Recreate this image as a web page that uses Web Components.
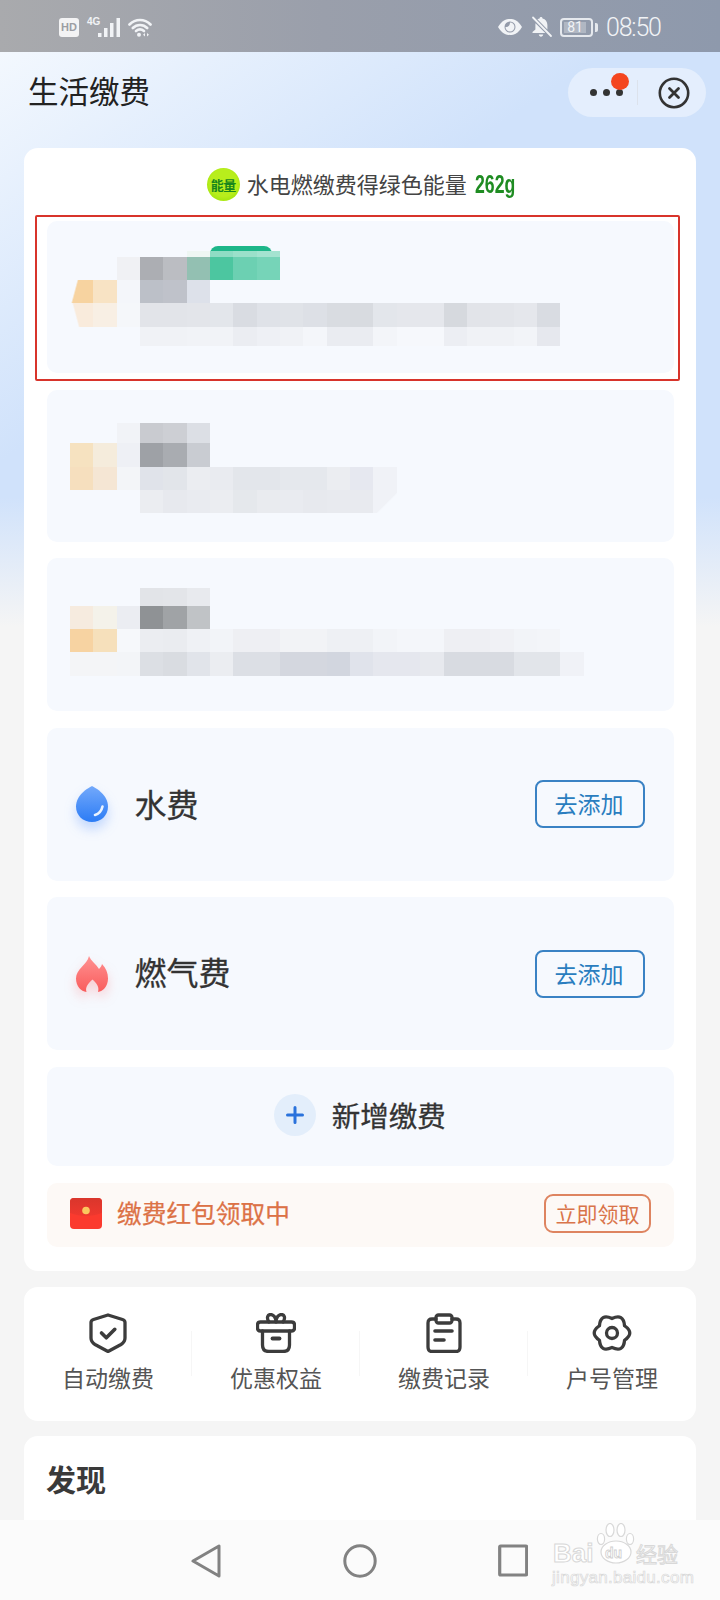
<!DOCTYPE html>
<html lang="zh">
<head>
<meta charset="utf-8">
<title>生活缴费</title>
<style>
  html, body { margin: 0; padding: 0; }
  body {
    width: 720px;
    height: 1600px;
    overflow: hidden;
    font-family: "Noto Sans CJK SC", "Noto Sans", sans-serif;
    color: #333;
    background: #f5f5f5;
  }
</style>
</head>
<body>
<app-page>
  <status-bar slot="top"></status-bar>
  <app-header title="生活缴费"></app-header>

  <pay-card>
    <energy-line slot="head" text="水电燃缴费得绿色能量" amount="262g"></energy-line>

    <pay-row top="30" marked>
      <pixel-mosaic tag
        heights="6 23 23 24 19"
        cells="- - - - - #eef6f3 #8fdcc4 #9be0ca #a4e3d0
               - - #f0f1f4 #acaeb3 #bbbdc2 #93c0b2 #4cc6a0 #6cd0b2 #76d4b8
               linear-gradient(105deg,transparent_24%,#f7d3a0_30%) #f8e3c4 #f4f6fa #bcc0c8 #bfc2ca #dde1ea
               linear-gradient(75deg,transparent_28%,#f9ebdc_34%) #f8efe4 #f5f7fa #e2e4e9 #e2e4e9 #e3e5ea #e3e6eb #d9dce2 #dfe2e8 #e0e3e8 #dde0e6 #d9dce1 #d8dbe0 #e3e6eb #e5e7ec #e5e7ec #d6d9de #e2e4e9 #e3e5ea #e5e7ec #d9dce2
               - - - #f0f2f6 #f0f2f6 #f1f3f7 #f1f3f7 #ebedf2 #eef0f5 #f0f2f6 #f4f6fa #eaecf1 #eaecf1 #f3f5f9 #f6f8fc #f6f8fc #ecEEf3 #f0f2f6 #f0f2f6 #f2f4f8 #e6e8ee"></pixel-mosaic>
    </pay-row>

    <pay-row top="33">
      <pixel-mosaic
        heights="20 24 23 23"
        cells="- - #f1f3f7 #c9cbd0 #cdcfd4 #dcdfe5
               #f6e2c0 #f5ecdc #eef0f5 #9ea1a6 #a9acb1 #c9ccd2
               #f6dfbe #f5e6d4 #f3f5f8 #e0e3ea #e2e5ea #ebedf1 #e9ebf0 #e3e6eb #e3e6eb #e5e8ed #e5e8ed #ebedf1 #e6e8f0 #f0f2f7
               - - - #ebedf1 #e7e9ee #e9ebf0 #ebedf1 #e5e8ec #e9ebef #e9ebf0 #e7e9ee #e8eaef #e8eaef linear-gradient(135deg,#f0f2f7_55%,transparent_60%)"></pixel-mosaic>
    </pay-row>

    <pay-row top="30" tall>
      <pixel-mosaic
        heights="18 23 23 24"
        cells="- - - #e2e4e8 #e3e5e9 #e8eaee
               #f6ebdf #f4f2ea #ebedf2 #8f9295 #a0a3a6 #c0c3c6
               #f7d3a2 #f6e0bb #f6f8fb #ebedf1 #eaecf0 #eff1f5 #f2f4f8 #eeeff3 #eeeff3 #f2f3f6 #f2f3f6 #eef0f4 #eef0f4 #f2f4f8 #f4f6fa #f4f6fa #eeeff3 #eeeff3 #f0f1f5 #f2f4f8 #f3f5f9
               #f4f5f7 #f4f5f7 #f3f5f8 #dcdfe4 #d9dce1 #e1e4ea #ebedf1 #dcdfe5 #dcdfe5 #d4d7df #d4d7df #d2d6df #e0e3eb #e5e7ee #e5e7ee #e7e9ee #d8dbe1 #d8dbe1 #d8dbe1 #e2e5ea #e2e5ea #f0f2f7"></pixel-mosaic>
    </pay-row>

    <bill-row name="水费" kind="water" action="去添加"></bill-row>
    <bill-row name="燃气费" kind="gas" action="去添加"></bill-row>
    <add-row text="新增缴费"></add-row>
    <promo-row text="缴费红包领取中" action="立即领取"></promo-row>
  </pay-card>

  <tool-card>
    <tool-item icon="shield" label="自动缴费"></tool-item>
    <tool-item icon="gift" label="优惠权益"></tool-item>
    <tool-item icon="list" label="缴费记录"></tool-item>
    <tool-item icon="gear" label="户号管理" last></tool-item>
  </tool-card>

  <find-card title="发现"></find-card>

  <nav-bar slot="bottom"></nav-bar>
</app-page>

<script>
// PAGE
class appPage extends HTMLElement {
  constructor() {
    super();
    this.attachShadow({ mode: 'open' });
    this.shadowRoot.innerHTML = `
      <style>
        :host { display: flex; flex-direction: column; width: 720px; height: 1600px; overflow: hidden; }
        .main {
          flex: 1;
          min-height: 0;
          overflow: hidden;
          display: flex;
          flex-direction: column;
          background:
            linear-gradient(180deg, rgba(245,245,245,0) 445px, #f5f5f5 575px),
            linear-gradient(146deg, #f3f8fe 0, #d0e2fb 340px);
        }
      </style>
      <slot name="top"></slot>
      <div class="main"><slot></slot></div>
      <slot name="bottom"></slot>
    `;
  }
}
customElements.define('app-page', appPage);

// STATUS BAR
class statusBar extends HTMLElement {
  constructor() {
    super();
    this.attachShadow({ mode: 'open' });
    this.shadowRoot.innerHTML = `
      <style>
        :host {
          display: flex;
          align-items: center;
          justify-content: space-between;
          flex: none;
          height: 52px;
          padding: 2px 60px 0 59px;
          box-sizing: border-box;
          color: #f1f3f6;
          background: linear-gradient(90deg, #a9aaad 0%, #9a9fab 45%, #8e99ac 100%);
        }
        .side { display: flex; align-items: center; }
        .hd {
          width: 20px; height: 19px; border-radius: 3px; background: #f3f3f4; color: #9c9ea3;
          font: 700 11px/19px "Liberation Sans", sans-serif; text-align: center;
        }
        .net { position: relative; width: 34px; height: 20px; margin-left: 8px; }
        .g4 { font: 700 10px/10px "Liberation Sans", sans-serif; display: block; width: 12px; }
        svg { display: block; }
        .sig { position: absolute; right: 0; bottom: 0; }
        .bat {
          width: 33px; height: 19px; box-sizing: border-box; border: 2px solid #e6e9ee; border-radius: 4px;
          padding: 2px; margin-left: 7px;
        }
        .bat span {
          display: block; height: 11px; width: 22px; background: rgba(255,255,255,.28); color: #f1f3f6;
          font: 14px/11px "Roboto", sans-serif; text-align: center;
        }
        .tip { width: 3px; height: 9px; background: #e6e9ee; border-radius: 0 2px 2px 0; margin-left: 2px; }
        .time { font: 300 25px/30px "Roboto", sans-serif; letter-spacing: -1.2px; margin-left: 8px; width: 54px; padding-top: 2px; }
      </style>
      <div class="side">
        <span class="hd">HD</span>
        <div class="net">
          <span class="g4">4G</span>
          <svg class="sig" width="23" height="19" viewBox="0 0 23 19" fill="#f1f3f6">
            <rect x="0" y="15" width="3.500" height="4"/><rect x="6" y="10" width="3.500" height="9"/>
            <rect x="12" y="5" width="3.500" height="14"/><rect x="18.500" y="0" width="3.500" height="19"/>
          </svg>
        </div>
        <svg style="margin-left:7px" width="24" height="19" viewBox="0 0 24 19" fill="none" stroke="#f1f3f6" stroke-width="2.700" stroke-linecap="round">
          <path d="M1.500 6.500C7.500 .5 16.500 .5 22.500 6.500"/><path d="M4.800 10C8.800 6 15.200 6 19.200 10"/>
          <path d="M8 13C10.500 11 13.500 11 16 13"/>
          <circle cx="11" cy="16.800" r="2" fill="#f1f3f6" stroke="none"/>
          <path d="M17 15v3.500l-2-1.700zM19 15v3.500l2-1.700z" fill="#f1f3f6" stroke="none"/>
        </svg>
      </div>
      <div class="side">
        <svg width="26" height="18" viewBox="0 0 26 18">
          <path d="M1 9C5 2.500 9 1 13 1s8 1.500 12 8c-4 6.500-8 8-12 8S5 15.500 1 9z" fill="#f1f3f6"/>
          <circle cx="13" cy="9" r="5.500" fill="#939aa9"/>
          <path d="M13 4.500a4.500 4.500 0 1 1-4.500 4.500c2.500.5 4.500-1.500 4.500-4.500z" fill="#f1f3f6"/>
        </svg>
        <svg style="margin-left:7px" width="23" height="22" viewBox="0 0 23 22" fill="#f1f3f6">
          <path d="M11 1c.9 0 1.500.6 1.500 1.400C15.500 3 17.400 5.500 17.400 9v4.500l-10-10.200C8.300 2.800 9.200 2.500 9.600 2.400 9.600 1.600 10.200 1 11 1z"/>
          <path d="M5.500 7.200 15.300 17H2.500v-1l2.900-2.500V9c0-.6 0-1.200.1-1.800z"/>
          <path d="M8.800 18.500h4.400c-.2 1.300-1.100 2.200-2.200 2.200s-2-.9-2.200-2.200z"/>
          <path d="M3 1.500 21 20" stroke="#f1f3f6" stroke-width="1.800" stroke-linecap="round"/>
        </svg>
        <div class="bat"><span>81</span></div>
        <div class="tip"></div>
        <div class="time">08:50</div>
      </div>
    `;
  }
}
customElements.define('status-bar', statusBar);

// HEADER
class appHeader extends HTMLElement {
  constructor() {
    super();
    this.attachShadow({ mode: 'open' });
    this.shadowRoot.innerHTML = `
      <style>
        :host {
          display: flex;
          align-items: center;
          justify-content: space-between;
          flex: none;
          height: 49px;
          margin: 16px 14px 31px 28px;
        }
        .title { font-size: 30.500px; line-height: 45px; padding-bottom: 4px; color: #222; }
        .capsule {
          position: relative;
          display: flex;
          align-items: center;
          width: 138px;
          height: 49px;
          box-sizing: border-box;
          padding-left: 22px;
          border-radius: 25px;
          background: rgba(255,255,255,.42);
        }
        .dots { display: flex; gap: 6px; }
        .dots i { width: 7px; height: 7px; border-radius: 50%; background: #333; }
        .badge { position: absolute; left: 43px; top: 5px; width: 18px; height: 17px; border-radius: 50%; background: #f4451f; }
        .line { width: 1px; height: 25px; background: #dce2ec; margin-left: 14px; margin-right: 20px; }
      </style>
      <div class="title"></div>
      <div class="capsule">
        <div class="dots"><i></i><i></i><i></i></div>
        <span class="badge"></span>
        <span class="line"></span>
        <svg width="32" height="32" viewBox="0 0 32 32" fill="none" stroke="#333" stroke-width="2.600">
          <circle cx="16" cy="16" r="14.200"/>
          <path d="M11.500 11.500l9 9M20.500 11.500l-9 9" stroke-width="2.800" stroke-linecap="round"/>
        </svg>
      </div>
    `;
    this.shadowRoot.querySelector('.title').innerText = this.getAttribute('title');
    this.removeAttribute('title');
  }
}
customElements.define('app-header', appHeader);

// MAIN CARD
class payCard extends HTMLElement {
  constructor() {
    super();
    this.attachShadow({ mode: 'open' });
    this.shadowRoot.innerHTML = `
      <style>
        :host { display: block; flex: none; margin: 0 24px; background: #fff; border-radius: 14px; padding: 19px 22px 24px 22.5px; }
        .rows { display: flex; flex-direction: column; gap: 16.6px; }
      </style>
      <slot name="head"></slot>
      <div class="rows"><slot></slot></div>
    `;
  }
}
customElements.define('pay-card', payCard);

// ENERGY LINE
class energyLine extends HTMLElement {
  constructor() {
    super();
    this.attachShadow({ mode: 'open' });
    this.shadowRoot.innerHTML = `
      <style>
        :host { display: flex; align-items: center; justify-content: center; height: 34px; margin-bottom: 20px; color: #444; }
        .coin {
          width: 33px; height: 33px; border-radius: 50%; flex: none;
          background: radial-gradient(circle at 50% 45%, #b8ee1c 0 55%, #a8e812 70%, #dcf83e 100%);
          color: #17861d; font-size: 13px; line-height: 33px; text-align: center; font-weight: 700; letter-spacing: -.5px;
        }
        .text { font-size: 22px; line-height: 30px; padding-bottom: 3px; margin-left: 7px; }
        .num {
          display: inline-block; transform: scaleX(.68); transform-origin: 0 50%;
          font: 700 26px/30px "Liberation Sans", sans-serif;
          color: #1f8c22; margin-left: 8px; width: 39px; white-space: nowrap;
        }
      </style>
      <span class="coin">能量</span>
      <span class="text"></span>
      <span class="num"></span>
    `;
    this.shadowRoot.querySelector('.text').innerText = this.getAttribute('text');
    this.shadowRoot.querySelector('.num').innerText = this.getAttribute('amount');
  }
}
customElements.define('energy-line', energyLine);

// BLURRED ACCOUNT ROW
class payRow extends HTMLElement {
  constructor() {
    super();
    this.attachShadow({ mode: 'open' });
    this.shadowRoot.innerHTML = `
      <style>
        :host {
          display: block; position: relative; height: 152px; box-sizing: border-box;
          padding-left: 23.5px; background: #f6f9fe; border-radius: 10px;
        }
        :host([tall]) { height: 153px; }
        .mark {
          position: absolute; left: -11.500px; right: -5.500px; top: -6px; bottom: -8px;
          border: 2px solid #d8342b; border-radius: 2px;
        }
      </style>
      <slot></slot>
    `;
    this.style.paddingTop = this.getAttribute('top') + 'px';
    if (this.hasAttribute('marked')) {
      const box = document.createElement('div');
      box.className = 'mark';
      this.shadowRoot.appendChild(box);
    }
  }
}
customElements.define('pay-row', payRow);

// MOSAIC: the pixelated part of the screenshot
class pixelMosaic extends HTMLElement {
  constructor() {
    super();
    this.attachShadow({ mode: 'open' });
    this.shadowRoot.innerHTML = `
      <style>
        :host { display: block; position: relative; }
        .grid { display: grid; grid-template-columns: repeat(22, 23.350px); position: relative; }
        .tag { position: absolute; left: 140px; top: -5px; width: 62px; height: 10px; background: #1db689; border-radius: 8px 8px 0 0; }
      </style>
      <div class="grid"></div>
    `;
    const grid = this.shadowRoot.querySelector('.grid');
    const heights = this.getAttribute('heights').split(' ');
    grid.style.gridTemplateRows = heights.map(h => h + 'px').join(' ');

    const lines = this.getAttribute('cells').trim().split('\n');
    lines.forEach((line, r) => {
      line.trim().split(/\s+/).forEach((cell, c) => {
        if (cell === '-') return;
        const div = document.createElement('div');
        div.style.gridRow = r + 1;
        div.style.gridColumn = c + 1;
        div.style.background = cell.replace(/_/g, ' ');
        grid.appendChild(div);
      });
    });

    if (this.hasAttribute('tag')) {
      const tag = document.createElement('div');
      tag.className = 'tag';
      this.shadowRoot.insertBefore(tag, grid);
    }
  }
}
customElements.define('pixel-mosaic', pixelMosaic);

// WATER / GAS ROW
const billIcons = {
  water: `<svg width="34" height="38" viewBox="0 0 34 38" style="filter:drop-shadow(0 7px 6px rgba(60,130,250,.28))">
      <defs><linearGradient id="w" x1="0" y1="0" x2="0" y2="1"><stop offset="0" stop-color="#73a9fb"/><stop offset="1" stop-color="#2c7cf5"/></linearGradient></defs>
      <path d="M17 1C21 3 33 10 33 21.500 33 30.500 26 37 17 37S1 30.500 1 21.500C1 10 13 3 17 1z" fill="url(#w)"/>
      <path d="M20 30C23.500 29 26.500 26 27.500 21.500" fill="none" stroke="#eaf3ff" stroke-width="2.600" stroke-linecap="round"/>
    </svg>`,
  gas: `<svg width="34" height="38" viewBox="0 0 34 38" style="filter:drop-shadow(0 6px 6px rgba(250,90,90,.25))">
      <defs><linearGradient id="f" x1="0" y1="0" x2="0" y2="1"><stop offset="0" stop-color="#ff9292"/><stop offset="1" stop-color="#f95c5c"/></linearGradient></defs>
      <path d="M14 1C16 6 21 9 24 14 25.500 12.500 26.500 11 27 9 31 13 33 18 33 23.500 33 31 28 36.500 23 37 24.500 32.500 22 28.500 17.500 24.500 13 28.500 10 32.500 11.500 37 6 36.500 1 31 1 23.500 1 14 12 10 14 1z" fill="url(#f)"/>
    </svg>`
};
class billRow extends HTMLElement {
  constructor() {
    super();
    this.attachShadow({ mode: 'open' });
    this.shadowRoot.innerHTML = `
      <style>
        :host {
          display: flex; align-items: center; height: 153px; box-sizing: border-box;
          padding: 0 29px 0 28px; background: #f6f9fe; border-radius: 10px;
        }
        .icon { width: 34px; height: 38px; flex: none; }
        .name { flex: 1; font-size: 32px; line-height: 44px; color: #333; margin-left: 26px; padding-bottom: 2px; -webkit-text-stroke: .3px #333; }
        :host([kind="gas"]) .name { padding-bottom: 6px; }
        button {
          width: 110px; height: 48px; box-sizing: border-box; padding: 0 2px 2px 0; border: 2px solid #3a82c4; border-radius: 8px;
          background: transparent; color: #2a7dbf; font: 23px/42px "Noto Sans CJK SC", sans-serif;
        }
      </style>
      <div class="icon"></div>
      <div class="name"></div>
      <button></button>
    `;
    this.shadowRoot.querySelector('.icon').innerHTML = billIcons[this.getAttribute('kind')];
    this.shadowRoot.querySelector('.name').innerText = this.getAttribute('name');
    this.shadowRoot.querySelector('button').innerText = this.getAttribute('action');
  }
}
customElements.define('bill-row', billRow);

// ADD ROW
class addRow extends HTMLElement {
  constructor() {
    super();
    this.attachShadow({ mode: 'open' });
    this.shadowRoot.innerHTML = `
      <style>
        :host {
          display: flex; align-items: center; justify-content: center; gap: 16px; height: 99px; box-sizing: border-box;
          background: #f6f9fe; border-radius: 10px; padding: 0 1px 2px 0;
        }
        .plus { width: 42px; height: 42px; border-radius: 50%; background: #e3eefb; display: flex; align-items: center; justify-content: center; }
        .text { font-size: 28.500px; line-height: 40px; color: #333; -webkit-text-stroke: .3px #333; }
      </style>
      <div class="plus">
        <svg width="18" height="18" viewBox="0 0 18 18" stroke="#2a72dc" stroke-width="3" stroke-linecap="round"><path d="M9 1.500v15M1.500 9h15"/></svg>
      </div>
      <div class="text"></div>
    `;
    this.shadowRoot.querySelector('.text').innerText = this.getAttribute('text');
  }
}
customElements.define('add-row', addRow);

// RED PACKET ROW
class promoRow extends HTMLElement {
  constructor() {
    super();
    this.attachShadow({ mode: 'open' });
    this.shadowRoot.innerHTML = `
      <style>
        :host {
          display: flex; align-items: center; height: 64px; box-sizing: border-box;
          padding: 0 23px 3px 23.500px; background: #fdf9f6; border-radius: 10px;
        }
        svg { flex: none; }
        .text { flex: 1; font-size: 24.700px; line-height: 36px; padding-bottom: 2px; color: #dc7246; margin-left: 15px; -webkit-text-stroke: .25px #dc7246; }
        button {
          width: 107px; height: 39px; box-sizing: border-box; padding: 0; border: 2px solid #de8460; border-radius: 9px;
          background: transparent; color: #d9744a; font: 21px/35px "Noto Sans CJK SC", sans-serif;
        }
      </style>
      <svg width="32" height="31" viewBox="0 0 32 31">
        <defs><linearGradient id="p" x1="0" y1="0" x2="0" y2="1"><stop offset="0" stop-color="#d9362c"/><stop offset="1" stop-color="#ef382e"/></linearGradient></defs>
        <rect x="0" y="0" width="32" height="31" rx="4" fill="#fb3a2e"/>
        <path d="M0 4a4 4 0 0 1 4-4h24a4 4 0 0 1 4 4v11c-10 4-22 4-32 0z" fill="url(#p)"/>
        <circle cx="16" cy="12.500" r="3.800" fill="#fbc75e"/>
      </svg>
      <div class="text"></div>
      <button></button>
    `;
    this.shadowRoot.querySelector('.text').innerText = this.getAttribute('text');
    this.shadowRoot.querySelector('button').innerText = this.getAttribute('action');
  }
}
customElements.define('promo-row', promoRow);

// TOOLS
class toolCard extends HTMLElement {
  constructor() {
    super();
    this.attachShadow({ mode: 'open' });
    this.shadowRoot.innerHTML = `
      <style>
        :host {
          display: grid; grid-template-columns: repeat(4, 1fr); flex: none;
          margin: 16px 24px 15px; height: 134px; box-sizing: border-box; padding-top: 26px;
          background: #fff; border-radius: 14px;
        }
      </style>
      <slot></slot>
    `;
  }
}
customElements.define('tool-card', toolCard);

const toolIcons = {
  shield: `<path d="M20 2 34.500 6.500C36 7 37 8 37 9.500V25C37 28 35.500 30 33 31.500L20 38.500 7 31.500C4.500 30 3 28 3 25V9.500C3 8 4 7 5.500 6.500z"/>
           <path d="M13.500 20l4.800 4.800 8.500-8.500" stroke-width="3.600"/>`,
  gift: `<path d="M4.500 9H35.500Q38.500 9 38.500 12V15Q38.500 18 35.500 18H4.500Q1.500 18 1.500 15V12Q1.500 9 4.500 9z"/>
         <path d="M13 9C10 4.500 12 1.500 14.500 1.500 17.500 1.500 20 4.500 20 9 20 4.500 22.500 1.500 25.500 1.500 28 1.500 30 4.500 27 9"/>
         <path d="M6.500 18V32Q6.500 38.500 13 38.500H27Q33.500 38.500 33.500 32V18"/>
         <path d="M16.500 25.500H23.500" stroke-width="3.800"/>`,
  list: `<path d="M12 6H8Q4 6 4 10V34Q4 38.500 8 38.500H32Q36 38.500 36 34V10Q36 6 32 6H28"/>
         <rect x="12" y="2" width="16" height="8" rx="2.500"/>
         <path d="M11 18H28M11 27H20" stroke-width="3.600"/>`,
  gear: `<path d="M32.560 12.750Q31.500 .1 20 5.500 8.500 .1 7.440 12.750-3 20 7.440 27.250 8.500 39.900 20 34.500 31.500 39.900 32.560 27.250 43 20 32.560 12.750z"/>
         <circle cx="20" cy="20" r="5.500"/>`
};
class toolItem extends HTMLElement {
  constructor() {
    super();
    this.attachShadow({ mode: 'open' });
    this.shadowRoot.innerHTML = `
      <style>
        :host { display: flex; flex-direction: column; align-items: center; position: relative; color: #555; }
        :host(:not([last]))::after {
          content: ""; position: absolute; right: 0; top: 18px; height: 45px; width: 1px; background: #f6f6f6;
        }
        svg { display: block; }
        .label { font-size: 23px; line-height: 32px; margin-top: 8px; }
      </style>
      <svg width="40" height="40" viewBox="0 0 40 40" fill="none" stroke="#3c3c3c" stroke-width="3.300" stroke-linecap="round" stroke-linejoin="round"></svg>
      <div class="label"></div>
    `;
    this.shadowRoot.querySelector('svg').innerHTML = toolIcons[this.getAttribute('icon')];
    this.shadowRoot.querySelector('.label').innerText = this.getAttribute('label');
  }
}
customElements.define('tool-item', toolItem);

// FIND CARD, runs under the nav bar
class findCard extends HTMLElement {
  constructor() {
    super();
    this.attachShadow({ mode: 'open' });
    this.shadowRoot.innerHTML = `
      <style>
        :host {
          display: block; flex: none; height: 160px; box-sizing: border-box; margin: 0 24px;
          padding: 20px 0 0 22px; background: #fff; border-radius: 14px 14px 0 0;
        }
        h2 { margin: 0; font-size: 30px; line-height: 44px; font-weight: 700; color: #3a3a3a; }
      </style>
      <h2></h2>
    `;
    this.shadowRoot.querySelector('h2').innerText = this.getAttribute('title');
    this.removeAttribute('title');
  }
}
customElements.define('find-card', findCard);

// NAV BAR WITH WATERMARK
class navBar extends HTMLElement {
  constructor() {
    super();
    this.attachShadow({ mode: 'open' });
    this.shadowRoot.innerHTML = `
      <style>
        :host {
          display: flex; align-items: flex-start; gap: 122px; flex: none; position: relative;
          height: 80px; box-sizing: border-box; padding: 24px 0 0 191px; background: #fbfbfb;
        }
        svg { display: block; }
        .mark { position: absolute; left: 552px; top: 3px; width: 130px; height: 62px; color: #fff; }
        .paw { position: absolute; left: 44px; top: 0; }
        .bai, .du, .jy, .url {
          position: absolute; white-space: nowrap; color: #fff; -webkit-text-stroke: 1px #d8d8d8;
        }
        .bai { left: 1px; top: 16px; font: 700 26px/28px "Liberation Sans", sans-serif; }
        .du { left: 53px; top: 21px; font: 700 14px/18px "Liberation Sans", sans-serif; -webkit-text-stroke: .8px #cfcfcf; }
        .jy { left: 84px; top: 17px; font: 21px/26px "Noto Sans CJK SC", sans-serif; }
        .url { left: 0; top: 46px; font: 17px/18px "Liberation Sans", sans-serif; -webkit-text-stroke: .7px #d8d8d8; letter-spacing: .3px; }
      </style>
      <svg width="30" height="34" viewBox="0 0 30 34" fill="none" stroke="#828282" stroke-width="3" stroke-linejoin="round"><path d="M28 2V32L2 17z"/></svg>
      <svg width="34" height="34" viewBox="0 0 34 34" fill="none" stroke="#828282" stroke-width="3"><circle cx="17" cy="17" r="15.200"/></svg>
      <svg style="margin-left:-1px" width="30" height="33" viewBox="0 0 30 33" fill="none" stroke="#828282" stroke-width="3.200" stroke-linejoin="round"><rect x="1.700" y="2" width="27" height="29" rx="1"/></svg>
      <div class="mark">
        <svg class="paw" width="40" height="42" viewBox="0 0 40 42" fill="#fff" stroke="#d8d8d8" stroke-width="1.200">
          <ellipse cx="5" cy="16" rx="3.600" ry="5.500"/>
          <ellipse cx="14" cy="7" rx="4" ry="6.500"/>
          <ellipse cx="25" cy="7" rx="4" ry="6.500"/>
          <ellipse cx="34" cy="16" rx="3.600" ry="5.500"/>
          <ellipse cx="20" cy="29" rx="15" ry="11"/>
        </svg>
        <span class="bai">Bai</span>
        <span class="du">du</span>
        <span class="jy">经验</span>
        <span class="url">jingyan.baidu.com</span>
      </div>
    `;
  }
}
customElements.define('nav-bar', navBar);
</script>
</body>
</html>
